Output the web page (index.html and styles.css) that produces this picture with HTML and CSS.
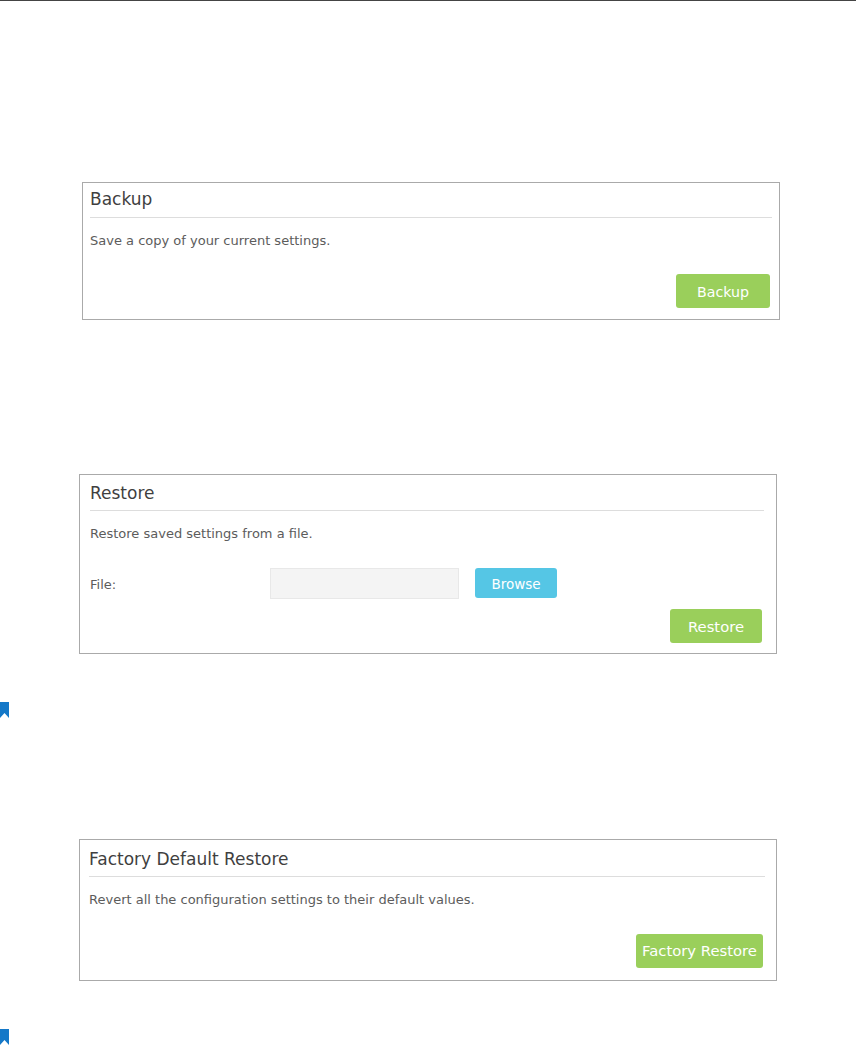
FILE: index.html
```html
<!DOCTYPE html>
<html lang="en">
  <head>
    <meta charset="UTF-8" />
    <meta name="viewport" content="width=device-width, initial-scale=1.0" />
    <title>Backup and Restore</title>
    <link rel="stylesheet" href="styles.css">
  </head>
  <body>
    <!-- backup -->
    <section class="panel backup">
      <h2>Backup</h2>
      <p>Save a copy of your current settings.</p>
      <div class="actions">
        <button class="btn green">Backup</button>
      </div>
    </section>

    <!-- restore -->
    <section class="panel restore">
      <h2>Restore</h2>
      <p>Restore saved settings from a file.</p>
      <div class="file-row">
        <label for="file">File:</label>
        <input type="text" id="file" />
        <button class="btn blue">Browse</button>
      </div>
      <div class="actions">
        <button class="btn green">Restore</button>
      </div>
    </section>

    <svg class="mark first-mark" viewBox="0 0 9 16">
      <path d="M0 0H9V16L4.5 11L0 16Z" />
    </svg>

    <!-- factory -->
    <section class="panel factory">
      <h2>Factory Default Restore</h2>
      <p>Revert all the configuration settings to their default values.</p>
      <div class="actions">
        <button class="btn green">Factory Restore</button>
      </div>
    </section>

    <svg class="mark last-mark" viewBox="0 0 9 16">
      <path d="M0 0H9V16L4.5 11L0 16Z" />
    </svg>
  </body>
</html>
```

FILE: styles.css
```css
* {
  box-sizing: border-box;
}
html {
  background: #fff;
}
body {
  margin: 0;
  height: 1045px;
  overflow: hidden;
  border-top: 1px solid #444;
  font-family: "DejaVu Sans", Verdana, sans-serif;
  color: #5c5c5c;
}

.panel {
  width: 698px;
  border: 1px solid #aaa;
  background: #fff;
}
.backup {
  height: 138px;
  margin: 181px 0 0 82px;
  padding: 0 7px;
}
.restore {
  height: 180px;
  margin: 154px 0 0 79px;
  padding: 0 12px 0 10px;
}
.factory {
  height: 142px;
  margin: 121px 0 0 79px;
  padding: 0 11px 0 9px;
}

.panel h2 {
  margin: 0;
  height: 35px;
  padding-top: 6px;
  border-bottom: 1px solid #ddd;
  font-size: 17px;
  line-height: 20px;
  font-weight: normal;
  color: #3f3f3f;
}
.restore h2 {
  height: 36px;
  padding-top: 8px;
}
.factory h2 {
  height: 37px;
  padding-top: 9px;
}
.panel p {
  margin: 15px 0 0;
  font-size: 13px;
  line-height: 16px;
}

.file-row {
  display: flex;
  align-items: center;
  margin-top: 26px;
  height: 31px;
  font-size: 13px;
}
.file-row label {
  width: 180px;
  padding-top: 2px;
}
.file-row input {
  width: 189px;
  height: 31px;
  margin-right: 16px;
  background: #f4f4f4;
  border: 1px solid #e8e8e8;
}

.actions {
  display: flex;
  justify-content: flex-end;
  margin-top: 25px;
  padding-right: 2px;
}
.restore .actions {
  margin-top: 10px;
}
.factory .actions {
  margin-top: 26px;
}

.btn {
  border: none;
  border-radius: 3px;
  color: #fff;
  font-family: inherit;
  padding: 0;
}
.green {
  background: #9acf5b;
  height: 34px;
  width: 92px;
  font-size: 14.8px;
}
.backup .green {
  width: 94px;
  font-size: 14.2px;
  padding-top: 1px;
}
.factory .green {
  width: 127px;
  font-size: 14.8px;
  padding-bottom: 2px;
}
.blue {
  background: #55c6e5;
  width: 82px;
  height: 30px;
  margin-top: -1px;
  padding-top: 2px;
  font-size: 13.5px;
}

.mark {
  display: block;
  width: 9px;
  height: 16px;
  fill: #1478c8;
}
.first-mark {
  margin-top: 48px;
}
.last-mark {
  margin-top: 48px;
}
```
